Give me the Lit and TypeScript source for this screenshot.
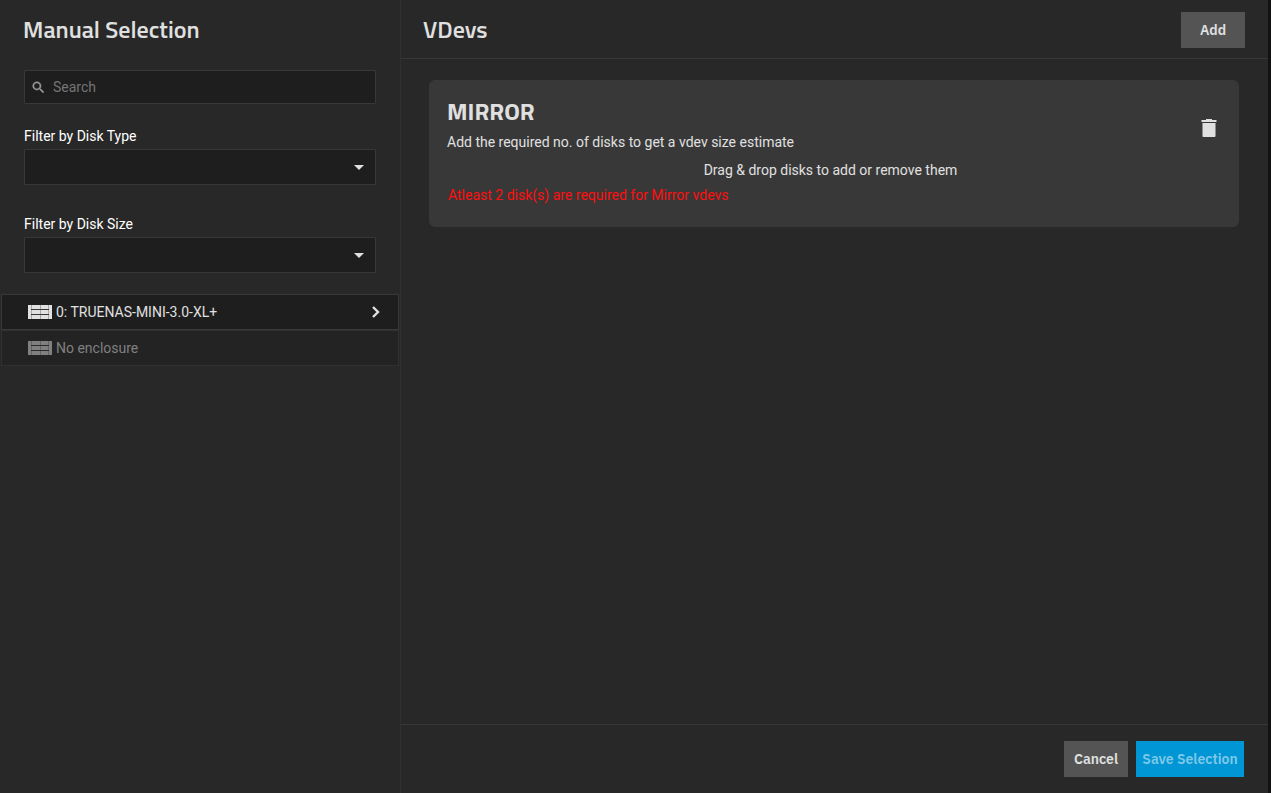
import { LitElement, html, css, svg } from "lit";
import { customElement, state } from "lit/decorators.js";

const enclosureIcon = svg`
  <path fill="currentColor" d="M0 0h24v14H0z" opacity=".7"/>
  <path fill="currentColor" d="M0 0h3v14H0zM21 0h3v14h-3zM4 0h8v4H4zM13 0h7v4h-7zM4 5h8v4H4zM13 5h7v4h-7zM4 10h8v4H4zM13 10h7v4h-7z"/>
  <path fill="#1e1e1e" opacity=".8" d="M3 4h18v1H3zM3 9h18v1H3z"/>`;

@customElement("app-root")
export class AppRoot extends LitElement {
  static styles = css`
    :host {
      display: block;
      min-height: 100vh;
      box-sizing: border-box;
      padding-right: 3px;
      background: #121212;
      color: #e0e0e0;
      font: 14px/20px Roboto, "Noto Sans", sans-serif;
    }
    * { box-sizing: border-box; }
    h1, h2, h3, p, ul { margin: 0; padding: 0; }
    .dialog {
      display: grid;
      grid-template-columns: 401px minmax(0, 1fr);
      min-height: 100vh;
      background: #282828;
    }
    .sidebar { border-right: 1px solid #303030; }
    .title {
      font: 600 24px/36px "Titillium Web", Roboto, sans-serif;
    }
    .sidebar .title { padding: 11px 23px 0; }
    .filters {
      display: flex;
      flex-direction: column;
      padding: 23px 24px 21px;
    }
    .search, .select {
      display: flex;
      align-items: center;
      background: #1e1e1e;
      border: 1px solid #383838;
      border-radius: 1px;
    }
    .search { height: 34px; padding: 0 7px; gap: 8px; margin-bottom: 22px; color: #999; }
    .search input {
      flex: 1;
      min-width: 0;
      padding: 0;
      border: 0;
      outline: 0;
      background: none;
      color: #e0e0e0;
      font: inherit;
    }
    .search input::placeholder { color: #757575; opacity: 1; }
    svg { display: block; flex: none; }
    .field { display: flex; flex-direction: column; gap: 3px; }
    .field + .field { margin-top: 29px; }
    .field label { color: #fff; }
    .select { display: grid; height: 36px; }
    .select select, .select svg { grid-area: 1 / 1; }
    .select select {
      appearance: none;
      width: 100%;
      height: 100%;
      padding: 0 32px 0 12px;
      border: 0;
      background: none;
      color: inherit;
      font: inherit;
    }
    .select svg { justify-self: end; margin-right: 11px; pointer-events: none; }
    .enclosures { list-style: none; padding: 0 1px; }
    .enclosure {
      display: flex;
      align-items: center;
      gap: 4px;
      width: 100%;
      height: 36px;
      padding: 0 18px 0 26px;
      border: 1px solid #303030;
      background: #232323;
      color: #808080;
      font: inherit;
      text-align: left;
    }
    .enclosure.active { background: #1e1e1e; border-color: #383838; color: #e0e0e0; }
    .enclosure span { flex: 1; }
    .main { display: flex; flex-direction: column; min-width: 0; }
    .header, .footer { display: flex; }
    .header {
      align-items: flex-start;
      justify-content: space-between;
      padding: 11px 23px 10px 22px;
      border-bottom: 1px solid #383838;
    }
    .header .button { margin-top: 1px; }
    .content { flex: 1; padding: 21px 29px 21px 28px; }
    .footer {
      justify-content: flex-end;
      gap: 8px;
      padding: 16px 24px;
      border-top: 1px solid #383838;
    }
    .button {
      height: 36px;
      min-width: 64px;
      padding: 0 6px;
      border: 0;
      background: #545454;
      color: #e0e0e0;
      font: 600 14px/20px "IBM Plex Sans", Roboto, sans-serif;
    }
    .button.primary { min-width: 108px; background: #0095d5; color: #7fc9e8; }
    .vdev {
      display: grid;
      grid-template-columns: 1fr auto;
      padding: 16px 17px 17px;
      border: 1px solid #383838;
      border-radius: 6px;
      background: #383838;
    }
    .vdev-name { font: 700 24px/28px "Titillium Web", Roboto, sans-serif; }
    .summary { padding-top: 7px; }
    .remove {
      align-self: end;
      padding: 0 0 12px;
      border: 0;
      background: none;
      color: #e0e0e0;
    }
    .hint, .error { grid-column: 1 / -1; }
    .hint { padding-top: 8px; padding-right: 7px; text-align: center; }
    .error { padding: 5px 0 4px 1px; color: #ff0f0f; }
  `;

  @state() private enclosures = [
    { name: "0: TRUENAS-MINI-3.0-XL+", active: true },
    { name: "No enclosure", active: false },
  ];

  private filter(id: string, label: string) {
    return html`
      <div class="field">
        <label for=${id}>${label}</label>
        <div class="select">
          <select id=${id}><option></option></select>
          <svg width="10" height="5" viewBox="0 0 10 5" aria-hidden="true">
            <path fill="#e0e0e0" d="M0 0h10L5 5z" />
          </svg>
        </div>
      </div>`;
  }

  render() {
    return html`
      <div class="dialog">
        <aside class="sidebar">
          <h1 class="title">Manual Selection</h1>
          <div class="filters">
            <div class="search">
              <svg width="13" height="13" viewBox="2 2 20 20" aria-hidden="true">
                <path fill="currentColor" stroke="currentColor" stroke-width=".6" d="M15.5 14h-.79l-.28-.27A6.47 6.47 0 0 0 16 9.5 6.5 6.5 0 1 0 9.5 16c1.61 0 3.09-.59 4.23-1.57l.27.28v.79l5 4.99L20.49 19l-4.99-5zm-6 0C7.01 14 5 11.99 5 9.5S7.01 5 9.5 5 14 7.01 14 9.5 11.99 14 9.5 14z" />
              </svg>
              <input type="text" placeholder="Search" aria-label="Search" />
            </div>
            ${this.filter("disk-type", "Filter by Disk Type")}
            ${this.filter("disk-size", "Filter by Disk Size")}
          </div>
          <ul class="enclosures">
            ${this.enclosures.map((e) => html`
              <li>
                <button class="enclosure ${e.active ? "active" : ""}">
                  <svg width="24" height="14" viewBox="0 0 24 14" shape-rendering="crispEdges" aria-hidden="true">${enclosureIcon}</svg>
                  <span>${e.name}</span>
                  ${e.active ? html`
                    <svg width="8" height="12" viewBox="0 0 8 12" aria-hidden="true">
                      <path fill="none" stroke="#e0e0e0" stroke-width="2.4" d="M1 1l5 5-5 5" />
                    </svg>` : ""}
                </button>
              </li>`)}
          </ul>
        </aside>
        <main class="main">
          <header class="header">
            <h2 class="title">VDevs</h2>
            <button class="button">Add</button>
          </header>
          <div class="content">
            <section class="vdev">
              <div>
                <h3 class="vdev-name">MIRROR</h3>
                <p class="summary">Add the required no. of disks to get a vdev size estimate</p>
              </div>
              <button class="remove" aria-label="Remove vdev">
                <svg width="24" height="24" viewBox="0 0 24 24" aria-hidden="true">
                  <path fill="currentColor" d="M5.5 7h13v13q0 1-1 1h-11q-1 0-1-1zM4.5 4H9V3h6v1h4.500v2h-15z" />
                </svg>
              </button>
              <p class="hint">Drag &amp; drop disks to add or remove them</p>
              <p class="error">Atleast 2 disk(s) are required for Mirror vdevs</p>
            </section>
          </div>
          <footer class="footer">
            <button class="button">Cancel</button>
            <button class="button primary">Save Selection</button>
          </footer>
        </main>
      </div>`;
  }
}
